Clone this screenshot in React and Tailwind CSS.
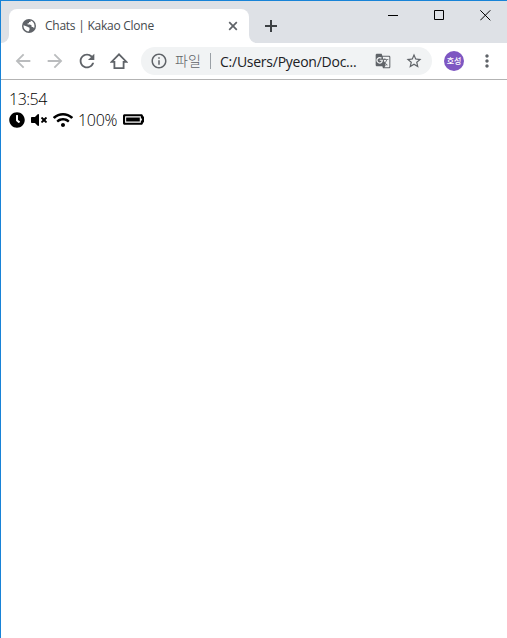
import React from "react";
import {
  MdArrowBack,
  MdArrowForward,
  MdRefresh,
  MdInfoOutline,
  MdGTranslate,
  MdStarBorder,
  MdMoreVert,
} from "react-icons/md";
import { FaClock, FaVolumeMute, FaWifi, FaBatteryFull } from "react-icons/fa";

function Globe() {
  return (
    <svg className="shrink-0" width="14" height="14" viewBox="0 0 14 14">
      <circle cx="7" cy="7" r="7" fill="#5f6368" />
      <path
        fill="#fff"
        d="M8.6 1.6C11 2.3 12.5 4.5 12.5 7c0 .8-.2 1.5-.5 2.2-.4-.8-.9-1.2-1.8-1.2H9.600V6.400L8 5.600H5.600V4.200H7V3h1.600z M1.500 6.300L5 7.500l2.500 1.300v1.900L6.500 12.400C3.600 12.200 1.400 9.800 1.500 6.300z"
      />
    </svg>
  );
}

function TabStrip() {
  return (
    <div className="flex h-[42px] bg-[#dee1e6]">
      <div className="mt-[34px] h-2 w-2 bg-white">
        <div className="h-2 w-2 rounded-br-lg bg-[#dee1e6]" />
      </div>
      <div className="mt-2 flex h-[34px] w-[240px] items-center rounded-t-lg bg-white pl-[13px] pr-[11px]">
        <Globe />
        <span className="ml-[9px] w-[111px] whitespace-nowrap text-[12px] font-normal leading-4 tracking-[-0.25px] text-[#45494d]">
          Chats | Kakao Clone
        </span>
        <svg className="ml-auto" width="10" height="10" viewBox="0 0 10 10" stroke="#5f6368" strokeWidth="1.7">
          <path d="M1.200 1.200l7.600 7.600M8.800 1.200l-7.600 7.600" />
        </svg>
      </div>
      <div className="mt-[34px] h-2 w-2 bg-white">
        <div className="h-2 w-2 rounded-bl-lg bg-[#dee1e6]" />
      </div>
      <svg className="ml-[8px] mt-[19px]" width="12" height="12" viewBox="0 0 12 12" stroke="#3c4043" strokeWidth="2">
        <path d="M6 0v12M0 6h12" />
      </svg>
      <div className="ml-auto mr-[16px] mt-[9px] flex gap-[35px]">
        <svg width="11" height="11" viewBox="0 0 11 11" stroke="#000" fill="none">
          <path d="M0 5.5h10" />
        </svg>
        <svg width="11" height="11" viewBox="0 0 11 11" stroke="#000" fill="none">
          <path d="M.5 .5h9v9h-9z" />
        </svg>
        <svg width="11" height="11" viewBox="0 0 11 11" stroke="#000" fill="none">
          <path d="M.3 .3l10 10M10.3 .3l-10 10" />
        </svg>
      </div>
    </div>
  );
}

function Toolbar() {
  return (
    <div className="flex h-[37px] items-center border-b border-[#b3b3b3] pl-[11px] text-[#5f6368]">
      <MdArrowBack size={22} className="shrink-0 text-[#babcbe]" />
      <MdArrowForward size={22} className="ml-[10px] shrink-0 text-[#babcbe]" />
      <MdRefresh size={22} className="ml-[10px] shrink-0" />
      <svg className="ml-[12px] shrink-0" width="18" height="18" viewBox="0 0 18 18" fill="none" stroke="currentColor" strokeWidth="1.8">
        <path d="M1.500 9.900H4.400V16.100H13.600V9.900H16.500L9 2.300z" />
      </svg>
      <div className="ml-[13px] flex h-7 w-[291px] items-center rounded-full bg-[#f1f3f4] pl-[9px] pr-[9px]">
        <MdInfoOutline size={18} className="shrink-0" />
        <span className="ml-[7px] w-[28px] whitespace-nowrap text-[14px] leading-5">파일</span>
        <span className="ml-[7px] h-4 w-px bg-[#9aa0a6]" />
        <span className="ml-[9px] w-[140px] whitespace-nowrap pt-px text-[14px] font-normal leading-5 tracking-[-0.25px] text-[#202124]">
          C:/Users/Pyeon/Doc...
        </span>
        <MdGTranslate size={16} className="ml-auto shrink-0" />
        <MdStarBorder size={18} className="ml-[14px] shrink-0" />
      </div>
      <div className="ml-3 flex h-5 w-5 items-center justify-center whitespace-nowrap rounded-full bg-[#7e57c2] text-[8px] font-medium leading-none text-white">
        호성
      </div>
      <MdMoreVert size={20} className="ml-[13px] shrink-0" />
    </div>
  );
}

function StatusBar() {
  return (
    <div className="px-2 pt-2 text-[16px] leading-[21px] text-black">
      <div className="h-[21px] pt-px">
        <span className="tracking-[-0.5px]">13:54</span>
      </div>
      <div className="flex h-[21px] items-center">
        <FaClock size={16} />
        <FaVolumeMute size={16} className="ml-[6px]" />
        <FaWifi size={20} className="ml-[6px]" />
        <span className="ml-[5px] w-[40px] pt-px tracking-[-0.3px]">100%</span>
        <FaBatteryFull size={21} className="ml-[5px]" />
      </div>
    </div>
  );
}

export default function App() {
  return (
    <div className="h-[638px] w-[507px] overflow-hidden border-l border-t border-[#1883d7] bg-white font-['Open_Sans','Noto_Sans_CJK_KR',sans-serif] font-light">
      <TabStrip />
      <Toolbar />
      <StatusBar />
    </div>
  );
}
